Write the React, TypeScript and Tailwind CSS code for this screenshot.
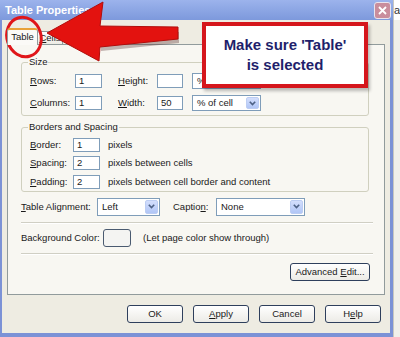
const Field = ({ value = "", w }: { value?: string; w: string }) => (
  <div className={`${w} h-[14px] border border-[#7f9db9] bg-white pl-[3px] leading-[12px] text-[9.5px]`}>{value}</div>
);

const Select = ({ value, w, h = "h-[16px]" }: { value: string; w: string; h?: string }) => (
  <div className={`${w} ${h} flex border border-[#7f9db9] bg-white`}>
    <div className="flex-1 pl-[4px] flex items-center text-[9.5px]">{value}</div>
    <div className="w-[13px] m-[1px] rounded-[2px] bg-gradient-to-b from-[#d3defc] to-[#b1c6f6] border border-[#bccdf3] flex items-center justify-center">
      <svg width="7" height="5" viewBox="0 0 7 5">
        <path d="M0.8 0.8 L3.5 3.6 L6.2 0.8" fill="none" stroke="#4d6185" strokeWidth="1.6" />
      </svg>
    </div>
  </div>
);

const Btn = ({ children, w = "w-[56px]" }: { children: React.ReactNode; w?: string }) => (
  <div className={`${w} h-[18px] rounded-[3px] border border-[#2e3f5c] bg-gradient-to-b from-white to-[#ecebe6] flex items-center justify-center text-[9.5px]`}>
    <span>{children}</span>
  </div>
);

const U = ({ children }: { children: React.ReactNode }) => <span className="underline underline-offset-1">{children}</span>;

const Sep = () => <div className="w-[352px] h-[2px] border-t border-[#d0cfc4] border-b border-b-white" />;

export default function App() {
  return (
    <div className="relative w-[400px] h-[337px] flex overflow-hidden bg-[#f3f2ec] text-[#1a1a1a] font-['Liberation_Sans',Arial,sans-serif]">
      {/* dialog window */}
      <div className="w-[393px] h-[337px] flex flex-col">
        <div className="h-[20px] flex items-center justify-between bg-gradient-to-b from-[#9cb3ec] to-[#7d99dc] pl-[5px] pr-[2px]">
          <span className="text-white font-bold text-[11px]">Table Properties</span>
          <div className="w-[17px] h-[17px] rounded-[3px] border border-[#e8e4ee] bg-[#c98d9c] flex items-center justify-center">
            <svg width="9" height="9" viewBox="0 0 9 9">
              <path d="M1 1 L8 8 M8 1 L1 8" stroke="white" strokeWidth="1.8" />
            </svg>
          </div>
        </div>

        <div className="flex-1 flex flex-col bg-[#eeece2] border-l-2 border-r-[3px] border-b-4 border-[#7c92d6]">
          {/* tabs */}
          <div className="mt-[8px] ml-[5px] h-[16px] flex items-end">
            <div className="relative z-10 w-[31px] h-[17px] -mb-[1px] rounded-t-[3px] border border-b-0 border-[#919b9c] border-t-2 border-t-[#e8a23a] bg-[#fbfaf7] flex items-center justify-center text-[9.5px]">
              Table
            </div>
            <div className="w-[25px] h-[13px] rounded-t-[2px] border border-b-0 border-l-0 border-[#919b9c] bg-gradient-to-b from-white to-[#ecebe4] flex items-center justify-center text-[9.5px]">
              <span><U>C</U>ells</span>
            </div>
          </div>

          {/* panel */}
          <div className="ml-[5px] w-[378px] h-[251px] border border-[#919b9c] bg-[#f8f7f2] pl-[13px] flex flex-col text-[9.5px]">
            <fieldset className="mt-[11px] w-[348px] border border-[#d0d0bf] rounded-[3px] pl-[8px] pt-[5px] pb-[4px]">
              <legend className="ml-[-2px] px-[1px] leading-[12px]">Size</legend>
              <div className="flex flex-col gap-[6px]">
                <div className="flex items-center">
                  <span className="w-[45px]"><U>R</U>ows:</span>
                  <Field value="1" w="w-[27px]" />
                  <span className="ml-[16px] w-[39px]"><U>H</U>eight:</span>
                  <Field w="w-[26px]" />
                  <div className="ml-[9px]"><Select value="%" w="w-[69px]" /></div>
                </div>
                <div className="flex items-center">
                  <span className="w-[45px]"><U>C</U>olumns:</span>
                  <Field value="1" w="w-[27px]" />
                  <span className="ml-[16px] w-[39px]"><U>W</U>idth:</span>
                  <Field value="50" w="w-[26px]" />
                  <div className="ml-[9px]"><Select value="% of cell" w="w-[69px]" /></div>
                </div>
              </div>
            </fieldset>

            <fieldset className="mt-[5px] w-[348px] border border-[#d0d0bf] rounded-[3px] pl-[8px] pt-[5px] pb-[2px]">
              <legend className="ml-[-2px] px-[1px] leading-[12px]">Borders and Spacing</legend>
              <div className="flex flex-col gap-[4px]">
                <div className="flex items-center">
                  <span className="w-[43px]"><U>B</U>order:</span>
                  <Field value="1" w="w-[27px]" />
                  <span className="ml-[8px]">pixels</span>
                </div>
                <div className="flex items-center">
                  <span className="w-[43px]"><U>S</U>pacing:</span>
                  <Field value="2" w="w-[27px]" />
                  <span className="ml-[8px]">pixels between cells</span>
                </div>
                <div className="flex items-center">
                  <span className="w-[43px]"><U>P</U>adding:</span>
                  <Field value="2" w="w-[27px]" />
                  <span className="ml-[8px]">pixels between cell border and content</span>
                </div>
              </div>
            </fieldset>

            <div className="mt-[6px] flex items-center">
              <span className="w-[76px]"><U>T</U>able Alignment:</span>
              <Select value="Left" w="w-[63px]" h="h-[18px]" />
              <span className="ml-[13px] w-[43px]">Captio<U>n</U>:</span>
              <Select value="None" w="w-[89px]" h="h-[18px]" />
            </div>

            <div className="mt-[6px]"><Sep /></div>

            <div className="mt-[5px] flex items-center">
              <span className="w-[82px]">Background Color:</span>
              <div className="w-[28px] h-[18px] rounded-[3px] border border-[#4a5a70] bg-[#f4f4f2]" />
              <span className="ml-[12px]">(Let page color show through)</span>
            </div>

            <div className="mt-[6px]"><Sep /></div>

            <div className="mt-[8px] w-[349px] flex justify-end">
              <Btn w="w-[80px]">Advanced <U>E</U>dit...</Btn>
            </div>
          </div>

          {/* buttons */}
          <div className="mt-[10px] pr-[9px] flex justify-end gap-[10px]">
            <Btn>OK</Btn>
            <Btn><U>A</U>pply</Btn>
            <Btn>Cancel</Btn>
            <Btn>H<U>e</U>lp</Btn>
          </div>
        </div>
      </div>

      {/* window behind, on the right */}
      <div className="w-[7px] flex flex-col bg-[#f1f0ea] border-l border-[#c9c8c0]">
        <div className="h-[20px] bg-white text-[11px] leading-[20px] text-[#333]">a</div>
      </div>

      {/* annotation overlays */}
      <svg className="absolute left-0 top-0" width="200" height="70" viewBox="0 0 200 70">
        <polygon points="100,49 178,41 178,30 100,30" fill="#5a3030" opacity="0.35" transform="translate(1,2)" />
        <polygon points="47,33 103,2 100,26 178,27 178,39 100,47 99,61" fill="#e3120f" stroke="#b10d0b" strokeWidth="1" strokeLinejoin="round" />
        <ellipse cx="24" cy="37" rx="17" ry="20" fill="none" stroke="#e0161a" strokeWidth="3" transform="rotate(-18 24 37)" />
      </svg>

      <div className="absolute left-[202px] top-[22px] w-[166px] h-[66px] border-4 border-[#d5161c] bg-white shadow-[2px_3px_3px_rgba(0,0,0,0.25)] flex flex-col items-center justify-center font-bold text-[15px] leading-[20px] text-[#1f1f6b]">
        <span>Make sure 'Table'</span>
        <span>is selected</span>
      </div>
    </div>
  );
}
